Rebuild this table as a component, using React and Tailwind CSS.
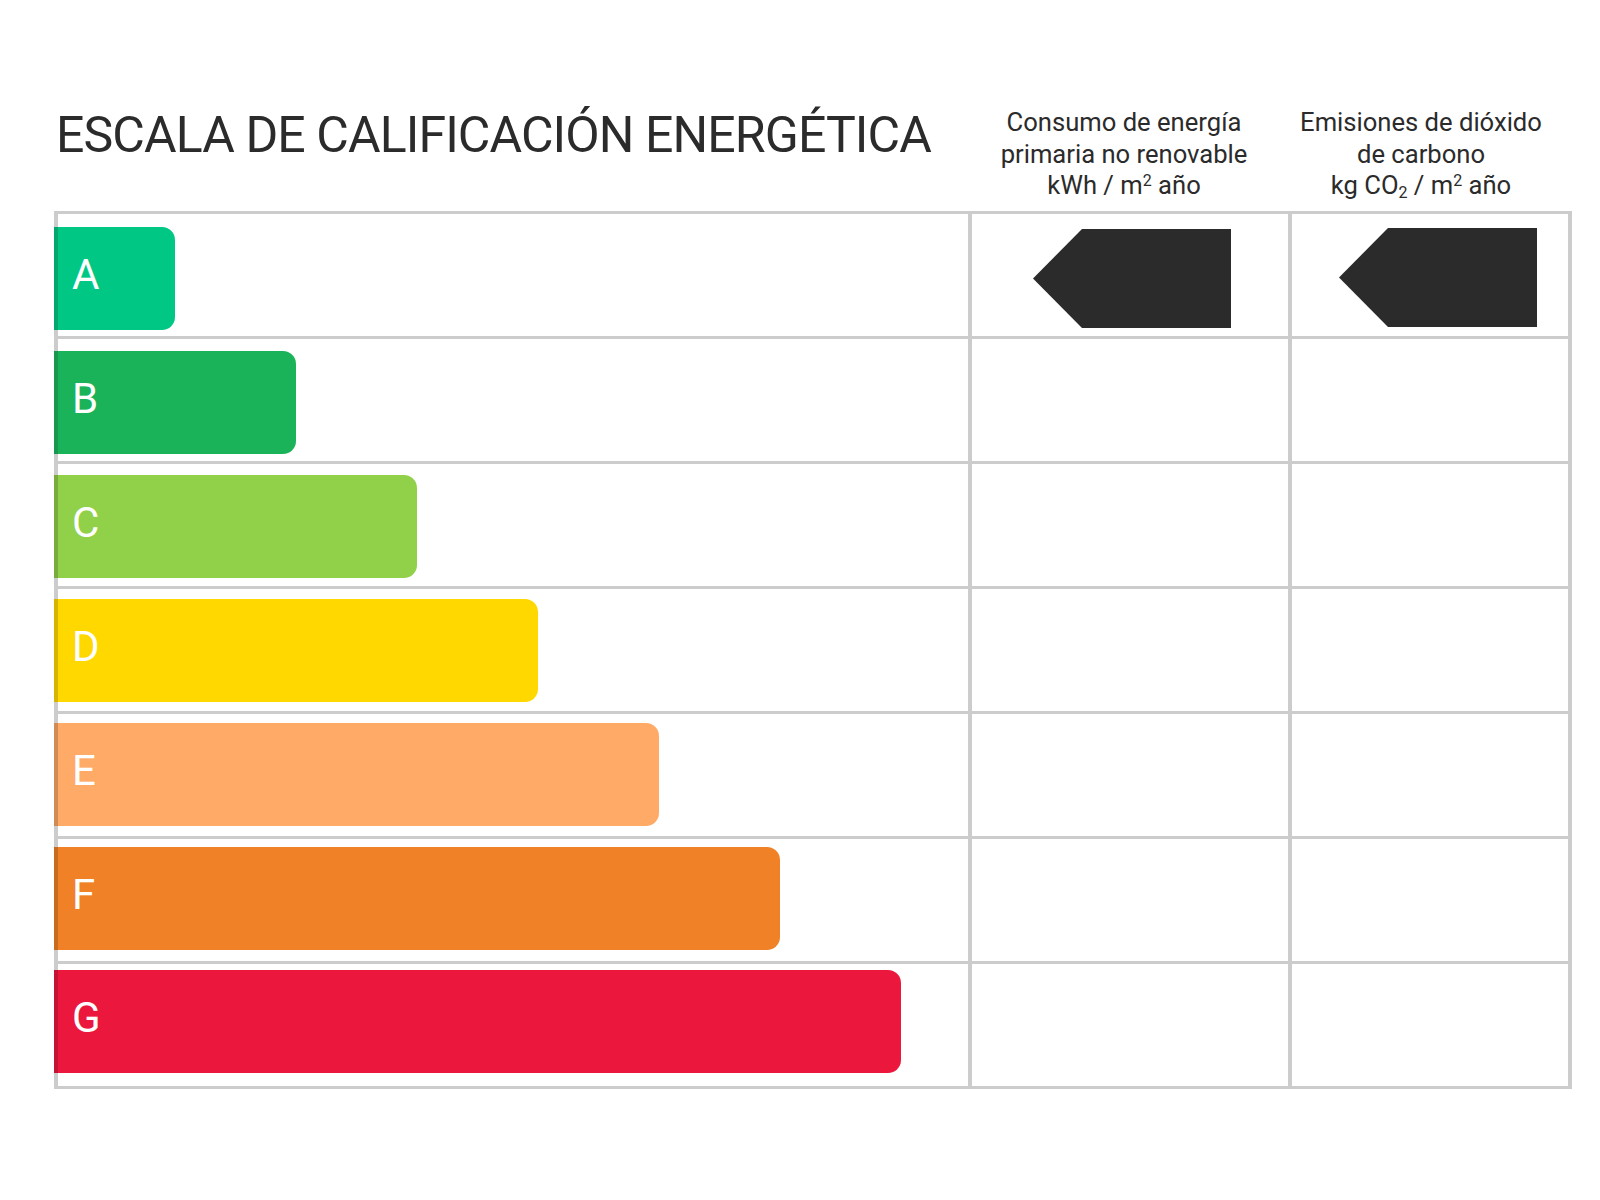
import React from 'react';

const ratings = [
    { letter: 'A', width: 'w-[121px]', mt: 'mt-[13px]', bg: 'bg-[#00c884]', edge: 'border-[#00a870]' },
    { letter: 'B', width: 'w-[242px]', mt: 'mt-[12px]', bg: 'bg-[#1ab35a]', edge: 'border-[#17984e]' },
    { letter: 'C', width: 'w-[363px]', mt: 'mt-[11px]', bg: 'bg-[#91d14a]', edge: 'border-[#7aab3d]' },
    { letter: 'D', width: 'w-[484px]', mt: 'mt-[10px]', bg: 'bg-[#ffd800]', edge: 'border-[#d6b400]' },
    { letter: 'E', width: 'w-[605px]', mt: 'mt-[9px]', bg: 'bg-[#ffaa66]', edge: 'border-[#d18b55]' },
    { letter: 'F', width: 'w-[726px]', mt: 'mt-[8px]', bg: 'bg-[#f08127]', edge: 'border-[#c96b1f]' },
    { letter: 'G', width: 'w-[847px]', mt: 'mt-[6px]', bg: 'bg-[#eb173c]', edge: 'border-[#c31533]' },
];

const Arrow = () => (
    <svg width="198" height="99" viewBox="0 0 198 99">
        <polygon points="49,0 198,0 198,99 49,99 0,49.5" fill="#2b2b2b" />
    </svg>
);

const App = () => {
    return (
        <div className="w-[1600px] h-[1200px] bg-white pt-[107px] pl-[54px] font-['Roboto',sans-serif] text-[#2b2b2b]">
            {/* header */}
            <div className="flex items-start w-[1518px]">
                <h1 className="w-[914px] mt-[3px] pl-[2px] text-[50px] leading-none tracking-[-0.9px] font-normal">
                    ESCALA DE CALIFICACIÓN ENERGÉTICA
                </h1>
                <div className="w-[320px] pr-[8px] text-center text-[25.6px] leading-[31.5px]">
                    <p>Consumo de energía</p>
                    <p>primaria no renovable</p>
                    <p>
                        kWh / m<sup className="text-[16px]">2</sup> año
                    </p>
                </div>
                <div className="flex-1 pr-[18px] text-center text-[25.6px] leading-[31.5px]">
                    <p>Emisiones de dióxido</p>
                    <p>de carbono</p>
                    <p>
                        kg CO<sub className="text-[16px]">2</sub> / m<sup className="text-[16px]">2</sup> año
                    </p>
                </div>
            </div>

            {/* table */}
            <div className="mt-[9px] w-[1518px] border-t-[3px] border-x-4 border-[#cccccc]">
                {ratings.map((r, i) => (
                    <div key={r.letter} className="flex h-[125px] border-b-[3px] border-[#cccccc]">
                        <div className="w-[910px]">
                            <div
                                className={`${r.width} ${r.mt} ${r.bg} ${r.edge} -ml-1 h-[103px] border-l-4 rounded-r-[13px] flex items-center pb-[6px] pl-[14px]`}
                            >
                                <span className="text-white text-[42px] leading-none">{r.letter}</span>
                            </div>
                        </div>
                        <div className="w-[320px] border-l-4 border-[#cccccc] pl-[61px] pt-[15px]">
                            {i === 0 && <Arrow />}
                        </div>
                        <div className="flex-1 border-l-4 border-[#cccccc] pl-[47px] pt-[14px]">
                            {i === 0 && <Arrow />}
                        </div>
                    </div>
                ))}
            </div>
        </div>
    );
};

export default App;
